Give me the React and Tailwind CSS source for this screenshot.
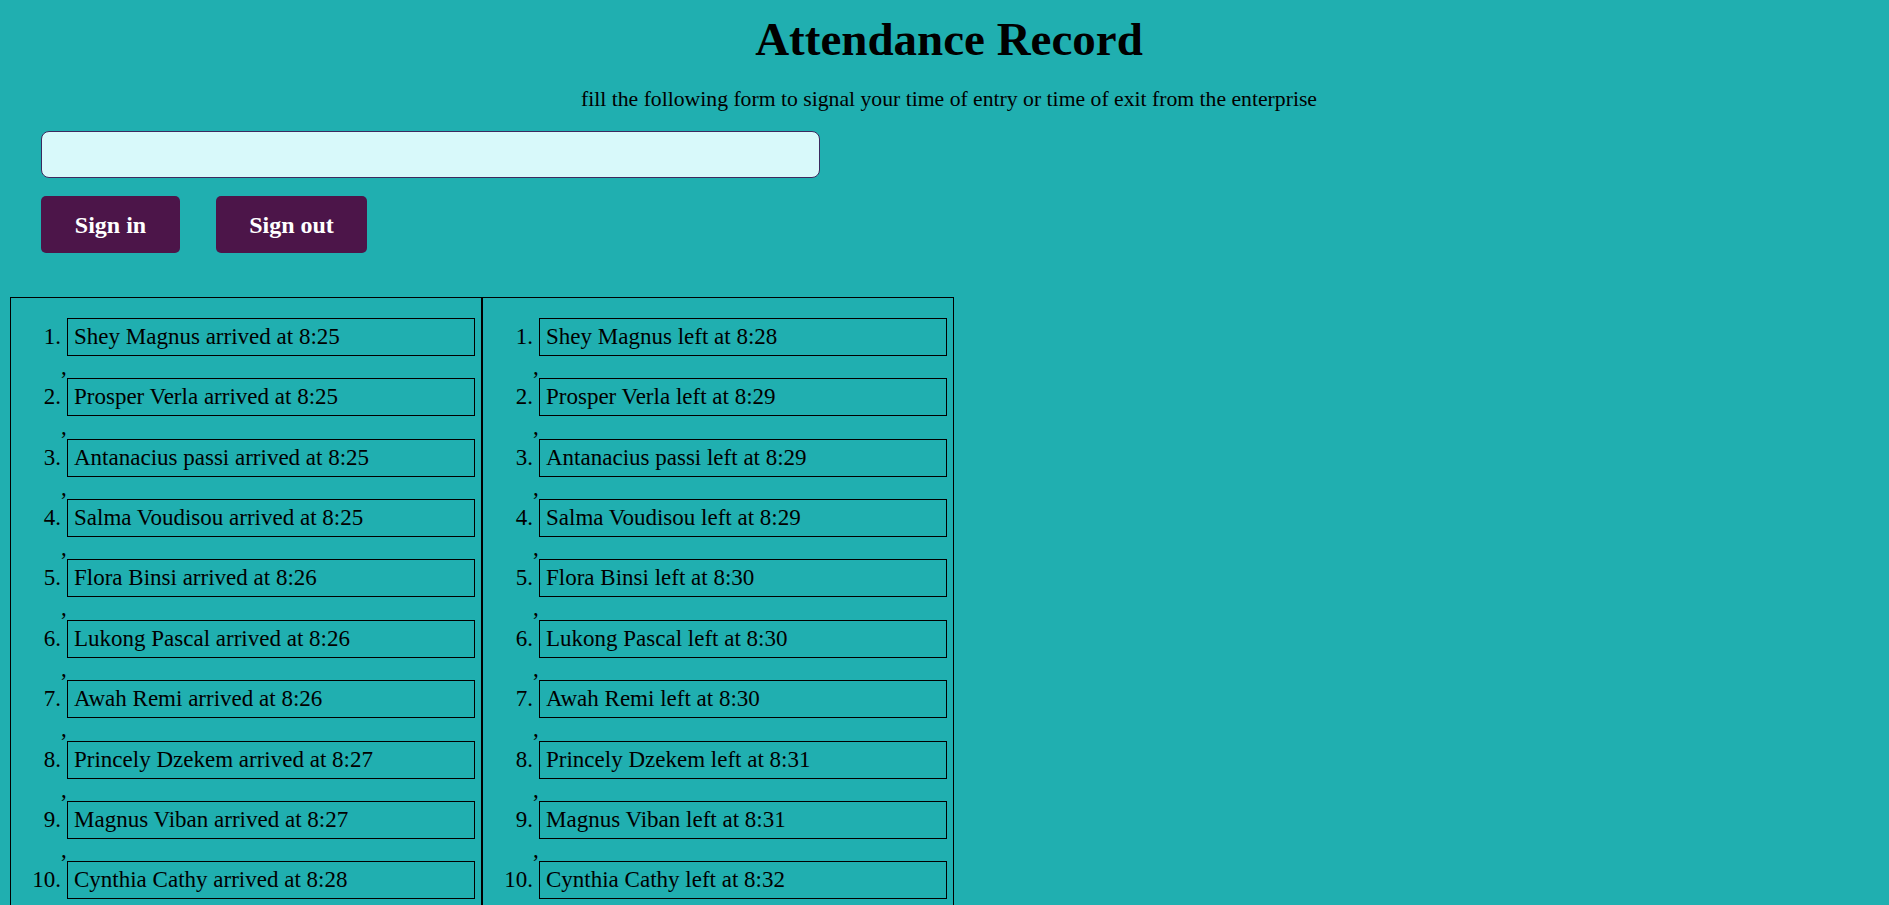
import React from "react";

const arrivals = [
  ["Shey Magnus", "8:25"],
  ["Prosper Verla", "8:25"],
  ["Antanacius passi", "8:25"],
  ["Salma Voudisou", "8:25"],
  ["Flora Binsi", "8:26"],
  ["Lukong Pascal", "8:26"],
  ["Awah Remi", "8:26"],
  ["Princely Dzekem", "8:27"],
  ["Magnus Viban", "8:27"],
  ["Cynthia Cathy", "8:28"],
];

const departures = [
  ["Shey Magnus", "8:28"],
  ["Prosper Verla", "8:29"],
  ["Antanacius passi", "8:29"],
  ["Salma Voudisou", "8:29"],
  ["Flora Binsi", "8:30"],
  ["Lukong Pascal", "8:30"],
  ["Awah Remi", "8:30"],
  ["Princely Dzekem", "8:31"],
  ["Magnus Viban", "8:31"],
  ["Cynthia Cathy", "8:32"],
];

function RecordList({ items, verb }) {
  return (
    <div className="w-[472px] border border-black pt-[20px] pb-[24px] pr-[6px] text-[23px]">
      {items.map(([name, time], idx) => (
        <div key={name}>
          {idx > 0 && (
            <div className="h-[22.37px] leading-[22.37px] pl-[50px]">,</div>
          )}
          <div className="flex items-baseline">
            <span className="w-[56px] shrink-0 text-right pr-[6px] leading-[22px]">
              {idx + 1}.
            </span>
            <div className="w-[408px] h-[38px] border border-black pl-[6px] pt-[7px] leading-[22px] whitespace-nowrap">
              {name} {verb} at {time}
            </div>
          </div>
        </div>
      ))}
    </div>
  );
}

export default function App() {
  return (
    <div className="min-h-screen bg-[#20afb0] text-black font-['Liberation_Serif','Times_New_Roman',serif]">
      <div className="pl-[9px]">
        <h1 className="pt-[15px] text-center text-[47px] font-bold leading-[48px]">
          Attendance Record
        </h1>
        <p className="mt-[24px] text-center text-[21.7px] leading-[24px]">
          fill the following form to signal your time of entry or time of exit
          from the enterprise
        </p>
      </div>

      <div className="pl-[41px] mt-[20px]">
        <input
          type="text"
          className="block w-[779px] h-[47px] rounded-[8px] border border-[#3c2a5e] bg-[#d8f9fa] px-3 text-[20px] outline-none"
        />
      </div>

      <div className="flex gap-[36px] pl-[41px] mt-[18px]">
        <button className="flex items-center justify-center w-[139px] h-[57px] rounded-[5px] bg-[#4c1549] text-white text-[24px] font-bold">
          Sign in
        </button>
        <button className="flex items-center justify-center w-[151px] h-[57px] rounded-[5px] bg-[#4c1549] text-white text-[24px] font-bold">
          Sign out
        </button>
      </div>

      <div className="ml-[10px] mt-[44px] flex">
        <RecordList items={arrivals} verb="arrived" />
        <RecordList items={departures} verb="left" />
      </div>
    </div>
  );
}
